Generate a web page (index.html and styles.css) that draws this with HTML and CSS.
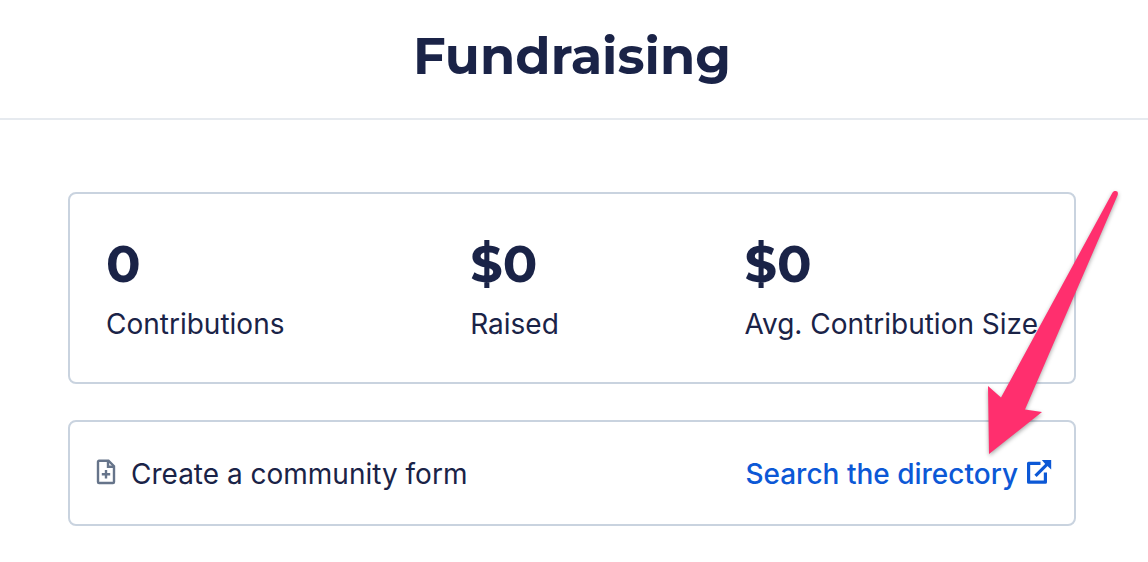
FILE: index.html
```html
<!DOCTYPE html>
<html lang="en">
    <head>
        <meta charset="UTF-8">
        <title>Fundraising</title>
        <link rel="stylesheet" href="styles.css">
    </head>

    <body>
        <header class="header">
            <h1 class="title">Fundraising</h1>
        </header>

        <main class="content">
            <section class="card stats">
                <div class="stat">
                    <p class="value">0</p>
                    <p class="label">Contributions</p>
                </div>
                <div class="stat">
                    <p class="value">$0</p>
                    <p class="label">Raised</p>
                </div>
                <div class="stat">
                    <p class="value">$0</p>
                    <p class="label">Avg. Contribution Size</p>
                </div>
            </section>

            <section class="card actions">
                <div class="action">
                    <svg class="file-icon" viewBox="0 0 20 26" aria-hidden="true">
                        <path d="M3 1.700H12.500L18 7.2V23a1 1 0 0 1-1 1H3a1 1 0 0 1-1-1V2.700a1 1 0 0 1 1-1z"/>
                        <path d="M12 2V7.800H18M10 11V19.400M5.800 15.200H14.2"/>
                    </svg>
                    <span>Create a community form</span>
                </div>
                <a class="link" href="#">Search the directory
                    <svg class="external-icon" viewBox="0 0 26 26" aria-hidden="true">
                        <path d="M14.5 4.3H2.6V23.2H19.4V13.5"/>
                        <path d="M9.5 16.8L22 4.3"/>
                        <path class="head" d="M15.8 1H25.2V10.4L22 7.5L18.6 4.2z"/>
                    </svg>
                </a>
            </section>

            <!-- pointer to the directory link -->
            <svg class="arrow" viewBox="0 0 140 280" aria-hidden="true">
                <path d="M122 13.5L11 217.500L-2 206L-1 274L52 232L35 229.500L127.500 15.500C128.500 12.500 127.500 11 125.500 11C124 11 123 11.500 122 13.500z"/>
            </svg>
        </main>
    </body>
</html>
```

FILE: styles.css
```css
body{margin:0; background-color:#fff; color:#1a2347; font-family:Inter,"Liberation Sans",sans-serif;}
h1,p{margin:0;}

.header{padding:24px 72px 30px 68px; border-bottom:2px solid #e6eaef; text-align:center;}
.title{font-family:Montserrat,Inter,sans-serif; font-size:51px; line-height:64px; font-weight:700;}

.content{position:relative; padding:72px 72px 36px 68px;}
.card{display:flex; justify-content:space-between; border:2px solid #c9d3df; border-radius:8px;}

.stats{margin-bottom:36px; padding:38px 36px 40px;}
.value{font-family:Montserrat,Inter,sans-serif; font-size:51px; line-height:64px; font-weight:700;}
.label{margin-top:10px; font-size:28px; line-height:36px;}

.actions{align-items:center; padding:34px 22px 32px 26px; font-size:28px; line-height:36px;}
.action{display:flex; align-items:center; gap:15px;}
.link{display:flex; align-items:center; gap:8px; color:#0c58d6; font-weight:500; text-decoration:none;}
.link:hover{text-decoration:underline;}

svg{fill:none; stroke:currentColor;}
.file-icon,.external-icon{height:26px; margin-bottom:4px;}
.file-icon{width:20px; color:#66748a; stroke-width:2.4;}
.external-icon{width:26px; stroke-width:3.2; stroke-linejoin:round;}
.external-icon .head{fill:currentColor; stroke:none;}

.arrow{position:absolute; top:60px; right:18px; width:140px; height:280px; overflow:visible; pointer-events:none; filter:drop-shadow(0 2px 2px rgba(0,0,0,0.35));}
.arrow path{fill:#ff2f6e; stroke:none;}
```
